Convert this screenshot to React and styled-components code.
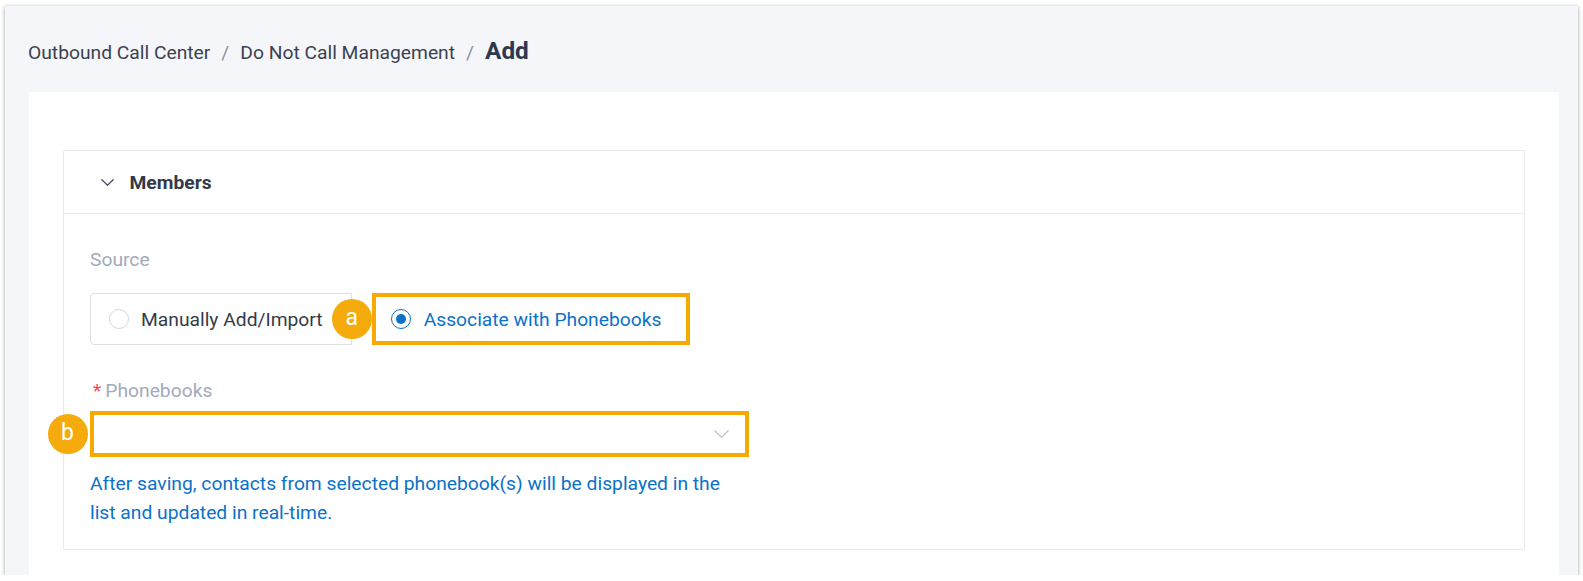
import React from "react";
import styled, { createGlobalStyle } from "styled-components";

const Global = createGlobalStyle`
  html, body { margin: 0; padding: 0; background: #ffffff; }
  body { font-family: Roboto, "Liberation Sans", sans-serif; -webkit-font-smoothing: antialiased; }
  * { box-sizing: border-box; }
`;

const FS = "19.25px";

const Window = styled.div`
  margin: 6px 5.5px 0 5px;
  height: 569px;
  background: #f5f6f9;
  box-shadow: 0 1px 4px rgba(0, 0, 0, 0.38);
  display: flex;
  flex-direction: column;
  overflow: hidden;
`;

const TopBar = styled.div`
  height: 86px;
  flex: none;
  display: flex;
  align-items: center;
  padding: 2px 0 0 23px;
`;

const Crumbs = styled.nav`
  display: flex;
  align-items: baseline;
  font-size: ${FS};
  color: #3a4252;
`;

const Crumb = styled.span`
  white-space: nowrap;
`;

const Sep = styled.span`
  color: #8c919b;
  margin: 0 11px;
`;

const Current = styled.span`
  font-size: 24.4px;
  font-weight: 700;
  color: #2b3850;
`;

const Panel = styled.div`
  flex: 1;
  margin: 0 18.5px 0 24px;
  background: #ffffff;
  padding: 58px 34.5px 0 33.5px;
`;

const Card = styled.section`
  border: 1px solid #e8eaee;
  border-radius: 2px;
  background: #fff;
`;

const CardHeader = styled.div`
  height: 63px;
  display: flex;
  align-items: center;
  gap: 16px;
  padding-left: 37px;
  border-bottom: 1px solid #e8eaee;
  font-size: ${FS};
  font-weight: 700;
  color: #323a48;
`;

const CardBody = styled.div`
  padding: 32px 27px 22px 26.5px;
`;

const Label = styled.div`
  font-size: ${FS};
  line-height: 28px;
  color: #a3aab9;
  margin-top: ${(p) => p.$mt || 0}px;
  padding-left: ${(p) => p.$pl || 0}px;
`;

const Req = styled.span`
  color: #f5475b;
  margin-right: 4px;
`;

const RadioGroup = styled.div`
  margin-top: 19px;
  display: flex;
  height: 52px;
`;

const Option = styled.label`
  display: flex;
  align-items: center;
  gap: 12px;
  padding: 0 28px 0 18px;
  border: 1px solid #dcdfe6;
  border-radius: 4px 0 0 4px;
  font-size: ${FS};
  color: #353c49;
  white-space: nowrap;
`;

const Marked = styled.label`
  position: relative;
  margin-left: 20px;
  display: flex;
  align-items: center;
  gap: 13px;
  padding: 0 25px 0 15px;
  border: 4px solid #f6a900;
  font-size: ${FS};
  color: #0a72c9;
  white-space: nowrap;
`;

const Circle = styled.span`
  width: 20px;
  height: 20px;
  border-radius: 50%;
  flex: none;
  background: #fff;
  border: ${(p) => (p.$on ? "1.5px solid #0a72c9" : "1px solid #d3d7de")};
  display: flex;
  align-items: center;
  justify-content: center;
  &::after {
    content: "";
    display: ${(p) => (p.$on ? "block" : "none")};
    width: 10px;
    height: 10px;
    border-radius: 50%;
    background: #0a72c9;
  }
`;

const Badge = styled.span`
  position: absolute;
  left: ${(p) => p.$left}px;
  top: 50%;
  transform: translateY(-50%);
  width: 40px;
  height: 40px;
  border-radius: 50%;
  background: #f5ab0c;
  color: #fff;
  font-size: 23px;
  line-height: 38px;
  text-align: center;
`;

const Select = styled.div`
  position: relative;
  margin-top: 6px;
  width: 659px;
  height: 46px;
  border: 4px solid #f6a900;
  background: #fff;
  display: flex;
  align-items: center;
  justify-content: flex-end;
  padding-right: 16px;
`;

const Help = styled.p`
  margin: 13px 0 0;
  max-width: 650px;
  font-size: ${FS};
  line-height: 28.5px;
  color: #0a72c9;
`;

const Chevron = ({ color, w = 12, h = 7, sw = 1.6 }) => (
  <svg width={w} height={h} viewBox={`0 0 ${w} ${h}`} fill="none">
    <path d={`M0.8 0.8 L${w / 2} ${h - 0.8} L${w - 0.8} 0.8`} stroke={color} strokeWidth={sw} strokeLinecap="round" strokeLinejoin="round" />
  </svg>
);

export default function App() {
  return (
    <>
      <Global />
      <Window>
        <TopBar>
          <Crumbs>
            <Crumb>Outbound Call Center</Crumb>
            <Sep>/</Sep>
            <Crumb>Do Not Call Management</Crumb>
            <Sep>/</Sep>
            <Current>Add</Current>
          </Crumbs>
        </TopBar>
        <Panel>
          <Card>
            <CardHeader>
              <Chevron color="#4a5160" w={13} h={7} sw={1.3} />
              Members
            </CardHeader>
            <CardBody>
              <Label>Source</Label>
              <RadioGroup>
                <Option>
                  <Circle />
                  Manually Add/Import
                </Option>
                <Marked>
                  <Badge $left={-44}>a</Badge>
                  <Circle $on />
                  Associate with Phonebooks
                </Marked>
              </RadioGroup>
              <Label $mt={32} $pl={3}>
                <Req>*</Req>Phonebooks
              </Label>
              <Select>
                <Badge $left={-46.5}>b</Badge>
                <Chevron color="#c2c6cd" w={15} h={8} sw={1.3} />
              </Select>
              <Help>
                After saving, contacts from selected phonebook(s) will be displayed in the list and updated in real-time.
              </Help>
            </CardBody>
          </Card>
        </Panel>
      </Window>
    </>
  );
}
